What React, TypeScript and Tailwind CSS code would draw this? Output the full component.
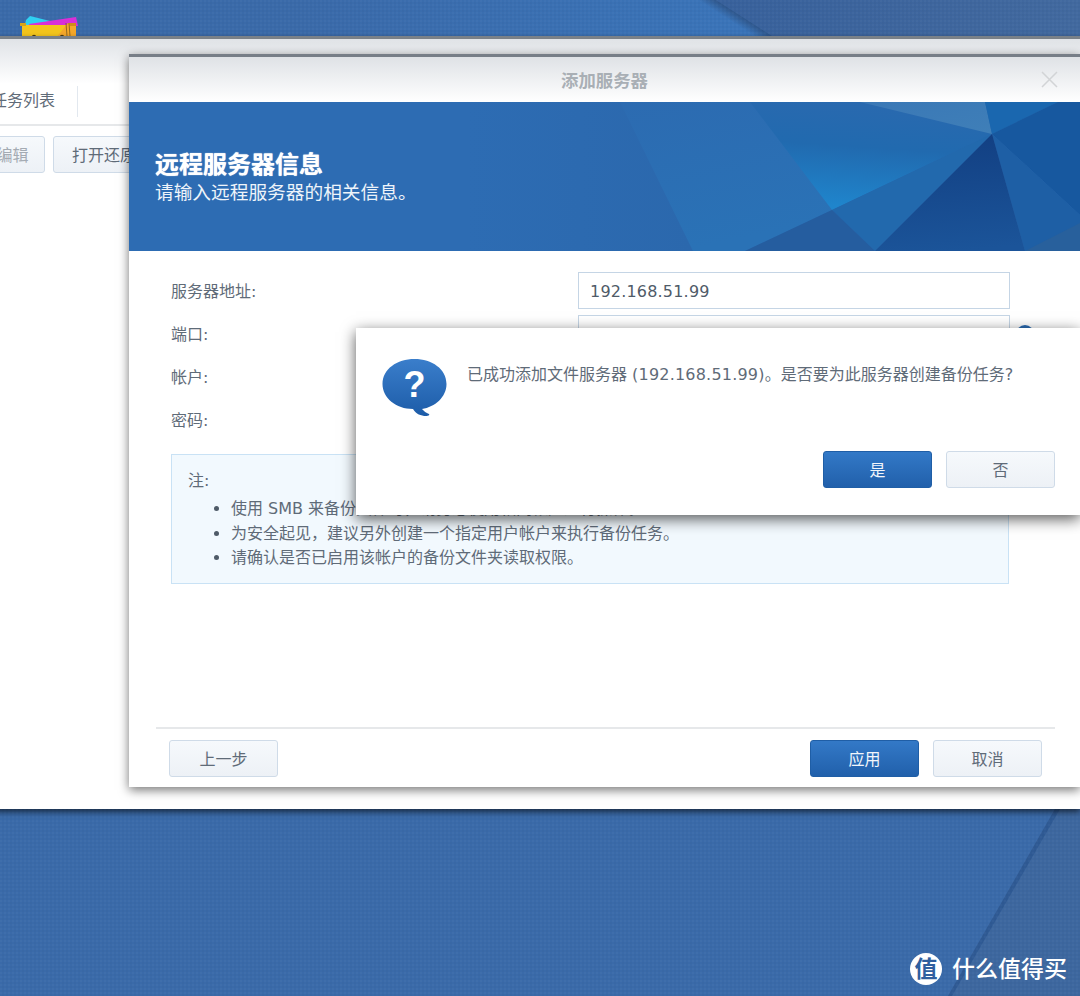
import React from "react";

const font = "[font-family:'DejaVu_Sans','Noto_Sans_CJK_SC',sans-serif]";
const COMMA = "\uFF0C";

function GrayButton({ children, className = "w-[109px] justify-center" }: { children: React.ReactNode; className?: string }) {
  return (
    <div className={`flex h-[37px] shrink-0 items-center rounded-[3px] border border-[#cfdbe8] bg-gradient-to-b from-[#f6f9fc] to-[#edf1f6] pt-[2px] text-[16px] text-[#5f6b78] ${className}`}>
      {children}
    </div>
  );
}

function BlueButton({ children }: { children: React.ReactNode }) {
  return (
    <div className="flex h-[37px] w-[109px] items-center justify-center rounded-[3px] border border-[#1f5ea6] bg-gradient-to-b from-[#3379c7] to-[#2160ab] pt-[2px] text-[16px] text-[#f2f6fb]">
      {children}
    </div>
  );
}

function DesktopArt() {
  return (
    <svg className="absolute inset-0" width="1080" height="996" viewBox="0 0 1080 996">
      <defs>
        <pattern id="dots" width="4" height="4" patternUnits="userSpaceOnUse">
          <rect width="2" height="2" fill="#ffffff" opacity="0.025" />
          <rect x="2" y="2" width="2" height="2" fill="#000000" opacity="0.025" />
        </pattern>
        <linearGradient id="topRight" x1="0" y1="0" x2="1" y2="0">
          <stop offset="0" stopColor="#38619c" />
          <stop offset="1" stopColor="#42699f" />
        </linearGradient>
        <linearGradient id="topLeft" x1="0" y1="0" x2="1" y2="0">
          <stop offset="0" stopColor="#3a6aa9" />
          <stop offset="1" stopColor="#3a75ba" />
        </linearGradient>
        <linearGradient id="band" gradientUnits="userSpaceOnUse" x1="698" y1="0" x2="706.1" y2="-12.6">
          <stop offset="0" stopColor="#2e5488" stopOpacity="0" />
          <stop offset="0.7" stopColor="#2e5488" stopOpacity="1" />
          <stop offset="1" stopColor="#2e5488" stopOpacity="0.6" />
        </linearGradient>
      </defs>
      <polygon points="300,0 716,0 772,36 300,36" fill="url(#topLeft)" />
      <polygon points="716,0 1080,0 1080,36 772,36" fill="url(#topRight)" />
      <polygon points="698,0 716,0 772,36 754,36" fill="url(#band)" />
      <polygon points="1055,809 1080,809 1080,996 948,996" fill="#3d679f" />
      <polygon points="1055,809 1060,809 952,996 948,996" fill="#2f5a94" />
      <rect width="1080" height="996" fill="url(#dots)" />
    </svg>
  );
}

function FolderIcon() {
  return (
    <svg className="absolute left-[18px] top-[14px]" width="62" height="24" viewBox="0 0 62 24">
      <polygon points="8,6 12,2 32,7 28,14 6,14" fill="#2fd0f2" />
      <polygon points="11,10 58,3 60,12 12,14" fill="#d92fd8" />
      <rect x="4" y="11" width="54" height="14" fill="#f4c51c" />
      <polygon points="38,24 50,9 58,9 58,24" fill="#f5a82a" />
      <rect x="2" y="9" width="6" height="3" fill="#d6a31a" />
      <rect x="52" y="9" width="6" height="3" fill="#d08c1a" />
      <circle cx="16" cy="23" r="2.2" fill="#4a3a10" />
      <circle cx="44" cy="23" r="2.2" fill="#4a3a10" />
      <path d="M48 9 L49 22 M51 9 L52 22" stroke="#7a5a1a" strokeWidth="0.8" fill="none" />
    </svg>
  );
}

function BannerArt() {
  return (
    <svg className="absolute inset-0" width="951" height="149" viewBox="0 0 951 149">
      <defs>
        <linearGradient id="bBase" x1="0" y1="0" x2="564" y2="0" gradientUnits="userSpaceOnUse">
          <stop offset="0" stopColor="#2d6cb3" />
          <stop offset="0.6" stopColor="#2d6cb3" />
          <stop offset="1" stopColor="#2b68ad" />
        </linearGradient>
        <linearGradient id="bFan" x1="0.75" y1="0" x2="0.6" y2="1">
          <stop offset="0" stopColor="#2a69af" />
          <stop offset="0.45" stopColor="#216aaf" />
          <stop offset="1" stopColor="#1f85cc" />
        </linearGradient>
        <linearGradient id="bMid" x1="0" y1="0" x2="0.3" y2="1">
          <stop offset="0" stopColor="#2c6bb1" />
          <stop offset="1" stopColor="#2a72b6" />
        </linearGradient>
        <linearGradient id="bDark" x1="0.4" y1="0" x2="0.5" y2="1">
          <stop offset="0" stopColor="#123f82" />
          <stop offset="1" stopColor="#1b5499" />
        </linearGradient>
        <linearGradient id="bLight" x1="0" y1="0" x2="1" y2="1">
          <stop offset="0" stopColor="#3a78b6" />
          <stop offset="1" stopColor="#3f7fb8" />
        </linearGradient>
      </defs>
      <rect width="951" height="149" fill="url(#bBase)" />
      <polygon points="491,0 625,0 703,108 616,149 564,149" fill="url(#bMid)" />
      <polygon points="621,0 731,0 863,32 703,108" fill="url(#bFan)" />
      <polygon points="731,0 856,0 863,32" fill="url(#bLight)" />
      <polygon points="856,0 929,0 863,32" fill="#1a67af" />
      <polygon points="929,0 951,0 951,113 863,32" fill="#17589f" />
      <polygon points="863,32 951,113 951,149 896,149" fill="#1e5fa5" />
      <polygon points="951,121 951,149 896,149" fill="#28609c" />
      <polygon points="703,108 863,32 746,149" fill="#2269ad" />
      <polygon points="863,32 896,149 746,149" fill="url(#bDark)" />
      <polygon points="616,149 703,108 746,149" fill="#255d9f" />
    </svg>
  );
}

function FormRow({ label, value }: { label: string; value?: string }) {
  return (
    <div className="flex h-[37px] items-center">
      <div className="w-[407px] pt-[2px] text-[#5f6b78]">{label}</div>
      <div className="flex h-[37px] w-[432px] items-center border border-[#c5d5e5] px-[11px] pt-[2px] tracking-[0.2px] text-[#4f5b68]">{value}</div>
    </div>
  );
}

export default function App() {
  return (
    <div className={`relative h-[996px] w-[1080px] overflow-hidden bg-[#3a6aa9] text-[16px] ${font}`}>
      <DesktopArt />
      <FolderIcon />

      {/* Back window */}
      <div className="absolute left-[-20px] top-[36px] flex h-[773px] w-[1100px] flex-col border-t-[3px] border-[#7a8188] bg-white shadow-[0_3px_6px_rgba(0,0,0,0.6)]">
        <div className="h-[45px] bg-gradient-to-b from-[#e0e3e7] to-white" />
        <div className="flex h-[42px] items-center border-b-2 border-[#e6e8ea] pb-[6px]">
          <span className="ml-[11px] text-[#5f6b78]">任务列表</span>
          <div className="ml-[22px] h-[31px] w-px bg-[#e2e8ef]" />
        </div>
        <div className="mt-[10px] flex gap-[8px]">
          <GrayButton className="w-[65px] justify-center text-[#a4abb3]">编辑</GrayButton>
          <GrayButton className="w-[109px] justify-start pl-[18px]">
            <span className="whitespace-nowrap">打开还原</span>
          </GrayButton>
        </div>
      </div>

      {/* Wizard dialog */}
      <div className="absolute left-[129px] top-[54px] flex h-[733px] w-[951px] flex-col border-t-[3px] border-[#777e87] bg-white shadow-[0_3px_10px_rgba(0,0,0,0.55)]">
        <div className="relative flex h-[45px] items-center justify-center bg-gradient-to-b from-[#dfe2e6] to-white pt-[4px] text-[17.4px] font-bold text-[#a9afb5]">
          添加服务器
          <svg className="absolute right-[22px] top-[14px]" width="17" height="17" viewBox="0 0 17 17">
            <path d="M1 1 L16 16 M16 1 L1 16" stroke="#d2d4d6" strokeWidth="1.5" fill="none" />
          </svg>
        </div>
        <div className="relative h-[149px] overflow-hidden">
          <BannerArt />
          <div className="relative pl-[26px] pt-[47px] text-white">
            <div className="text-[24px] font-bold leading-[32px] [text-shadow:0_0_1px_#ffffff]">远程服务器信息</div>
            <div className="text-[18.7px] leading-[24px] text-[#eef4fa]">请输入远程服务器的相关信息。</div>
          </div>
        </div>
        <div className="flex flex-1 flex-col pl-[42px] pt-[21px]">
          <div className="flex flex-col gap-[6px]">
            <FormRow label="服务器地址:" value="192.168.51.99" />
            <FormRow label="端口:" />
            <FormRow label="帐户:" />
            <FormRow label="密码:" />
          </div>
          <div className="mt-[16px] h-[130px] w-[838px] border border-[#c9e2f5] bg-[#f2f9fe] pl-[16px] pt-[14px] text-[#5f6b78]">
            <div className="leading-[24px]">注:</div>
            <ul className="mt-[4px] list-disc pl-[43px] leading-[24.5px] marker:text-[#4f5b68]">
              <li>使用 SMB 来备份文件时{COMMA}请务必使用相同帐户进行操作。</li>
              <li>为安全起见{COMMA}建议另外创建一个指定用户帐户来执行备份任务。</li>
              <li>请确认是否已启用该帐户的备份文件夹读取权限。</li>
            </ul>
          </div>
        </div>
        <div className="ml-[27px] flex w-[899px] justify-between border-t-2 border-[#e6e8ea] px-[13px] pb-[10px] pt-[11px]">
          <GrayButton>上一步</GrayButton>
          <div className="flex gap-[14px]">
            <BlueButton>应用</BlueButton>
            <GrayButton>取消</GrayButton>
          </div>
        </div>
        <div className="absolute left-[887px] top-[268px] h-[18px] w-[18px] rounded-full bg-[#2b6cb3]" />
      </div>

      {/* Message box */}
      <div className="absolute left-[356px] top-[328px] h-[187px] w-[724px] bg-white shadow-[0_4px_14px_rgba(0,0,0,0.65)]">
        <div className="flex pl-[26px] pt-[30px]">
          <svg width="65" height="58" viewBox="0 0 65 58" className="shrink-0">
            <defs>
              <linearGradient id="qb" x1="0" y1="0" x2="0" y2="1">
                <stop offset="0" stopColor="#3a7ecb" />
                <stop offset="1" stopColor="#1d5ca8" />
              </linearGradient>
            </defs>
            <path d="M32.5 1 C50 1 64.5 11 64.5 26 C64.5 39 53 49 40 51 C42 53 44 55 47 56 C48 57 46 58 44 58 C39 58 34 56 31 51 C14 51 0.5 40 0.5 26 C0.5 11 15 1 32.5 1 Z" fill="url(#qb)" />
            <text x="32.5" y="39" textAnchor="middle" fontSize="36" fontWeight="700" fill="#ffffff" fontFamily="'Liberation Sans',sans-serif">?</text>
          </svg>
          <div className="ml-[20px] mt-[2px] whitespace-nowrap leading-[30px] text-[#5f6b78]">
            已成功添加文件服务器 <span className="tracking-[0.2px]">(192.168.51.99)</span>。是否要为此服务器创建备份任务?
          </div>
        </div>
        <div className="absolute left-[467px] top-[123px] flex gap-[14px]">
          <BlueButton>是</BlueButton>
          <GrayButton>否</GrayButton>
        </div>
      </div>

      {/* Watermark */}
      <div className="absolute left-[910px] top-[953px] flex items-center gap-[10px]">
        <div className="flex h-[32px] w-[32px] items-center justify-center rounded-full bg-white text-[23px] font-bold leading-none text-[#2f5f9f]">值</div>
        <div className="whitespace-nowrap text-[23px] font-medium leading-[32px] text-white">什么值得买</div>
      </div>
    </div>
  );
}
